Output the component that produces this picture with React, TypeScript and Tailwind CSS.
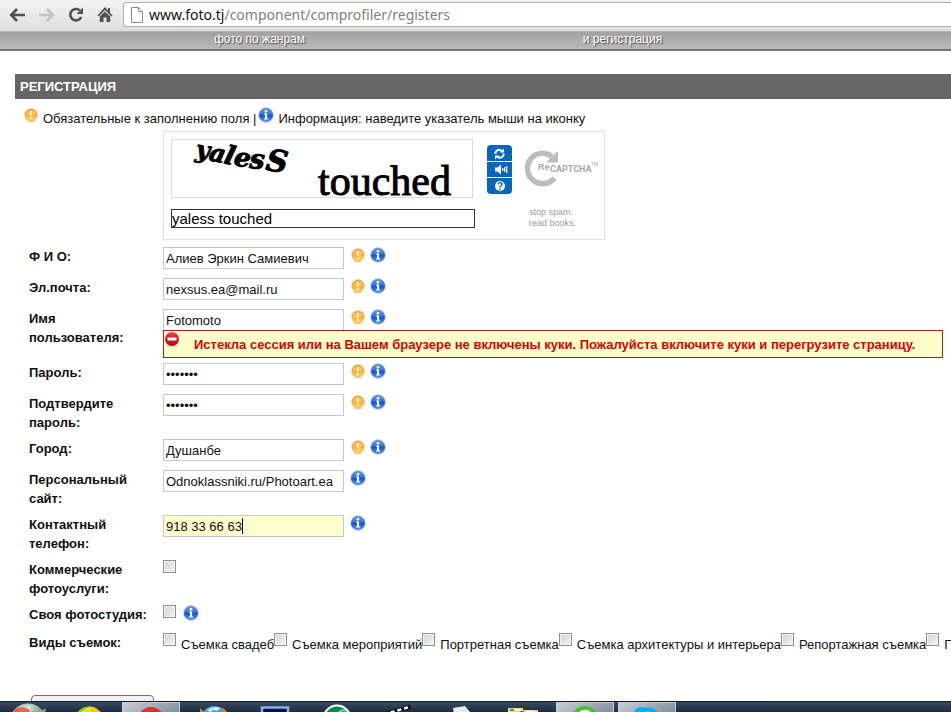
import React from 'react';

interface FieldRow {
  id: string;
  label: string;
  value: string;
  type?: string;
  required?: boolean;
  error?: string;
  focused?: boolean;
}

const fields: FieldRow[] = [
  { id: 'name', label: 'Ф И О:', value: 'Алиев Эркин Самиевич', required: true },
  { id: 'email', label: 'Эл.почта:', value: 'nexsus.ea@mail.ru', required: true },
  {
    id: 'username',
    label: 'Имя пользователя:',
    value: 'Fotomoto',
    required: true,
    error: 'Истекла сессия или на Вашем браузере не включены куки. Пожалуйста включите куки и перегрузите страницу.',
  },
  { id: 'password', label: 'Пароль:', value: 'fotomot', type: 'password', required: true },
  { id: 'password2', label: 'Подтвердите пароль:', value: 'fotomot', type: 'password', required: true },
  { id: 'city', label: 'Город:', value: 'Душанбе', required: true },
  { id: 'site', label: 'Персональный сайт:', value: 'Odnoklassniki.ru/Photoart.ea' },
  { id: 'phone', label: 'Контактный телефон:', value: '918 33 66 63', focused: true },
];

const shootings = [
  'Съемка свадеб',
  'Съемка мероприятий',
  'Портретная съемка',
  'Съемка архитектуры и интерьера',
  'Репортажная съемка',
  'Предметная съемка',
];

const RequiredIcon = () => (
  <svg className="w-4 h-4 shrink-0" viewBox="0 0 16 16" role="img" aria-label="Обязательное поле">
    <defs>
      <linearGradient id="orange" x1="0" y1="0" x2="0" y2="1">
        <stop offset="0" stopColor="#f0a63c" />
        <stop offset="0.5" stopColor="#fbb32c" />
        <stop offset="1" stopColor="#ffd765" />
      </linearGradient>
    </defs>
    <ellipse cx="8" cy="14.600" rx="5" ry="0.9" fill="#e6dccb" />
    <circle cx="8" cy="8" r="6.200" fill="url(#orange)" stroke="#eda943" strokeWidth="0.7" />
    <path d="M3 7a5.200 5.200 0 0 1 10 0q-5 2-10 0z" fill="#fff" opacity="0.22" />
    <path d="M7.100 4h1.800l-.3 5H7.400z" fill="#fff" />
    <circle cx="8" cy="11" r="1" fill="#fff" />
  </svg>
);

const InfoIcon = () => (
  <svg className="w-4 h-4 shrink-0" viewBox="0 0 16 16" role="img" aria-label="Информация">
    <defs>
      <linearGradient id="blue" x1="0" y1="0" x2="0" y2="1">
        <stop offset="0" stopColor="#6d9be2" />
        <stop offset="0.45" stopColor="#3a73d3" />
        <stop offset="0.5" stopColor="#0e50c8" />
        <stop offset="1" stopColor="#5c9df0" />
      </linearGradient>
    </defs>
    <circle cx="8" cy="8" r="7.200" fill="url(#blue)" stroke="#7d9fd6" strokeWidth="0.6" />
    <circle cx="8" cy="4.200" r="1.300" fill="#fff" />
    <path d="M6 6.500h3.100v5h1V12.600H6v-1.100h1V7.600H6z" fill="#fff" />
  </svg>
);

const ErrorIcon = () => (
  <svg className="w-4 h-4 shrink-0" viewBox="0 0 16 16" aria-hidden="true">
    <defs>
      <linearGradient id="red" x1="0" y1="0" x2="0" y2="1">
        <stop offset="0" stopColor="#e4505a" />
        <stop offset="0.5" stopColor="#cf1625" />
        <stop offset="1" stopColor="#b50f1c" />
      </linearGradient>
    </defs>
    <ellipse cx="8" cy="15" rx="5.500" ry="0.9" fill="#d9cfa8" />
    <circle cx="8" cy="8" r="7" fill="url(#red)" />
    <rect x="3.500" y="6.500" width="9" height="3" rx="0.5" fill="#fff" />
  </svg>
);

const Toolbar = () => (
  <div className="flex h-8 shrink-0 items-start border-b border-[#b5b5b5] bg-linear-to-b from-[#f4f4f4] to-[#dedede] pl-[9px]">
    <div className="flex shrink-0 items-center gap-[11px] pt-[5px]">
      <button type="button" aria-label="Назад">
        <svg className="w-[18px] h-5" viewBox="0 0 18 20" fill="none" stroke="#505050" strokeWidth="2.600">
          <path d="M2.500 10H16M8 4 2.200 10 8 16" />
        </svg>
      </button>
      <button type="button" aria-label="Вперед">
        <svg className="w-[18px] h-5" viewBox="0 0 18 20" fill="none" stroke="#c3c3c3" strokeWidth="2.600">
          <path d="M1 10h13.500M9 4 14.800 10 9 16" />
        </svg>
      </button>
      <button type="button" aria-label="Обновить">
        <svg className="w-[18px] h-5" viewBox="0 0 18 20" fill="none">
          <path d="M12.800 5.400A5.700 5.700 0 1 0 14.200 12" stroke="#505050" strokeWidth="2.600" />
          <path d="M16 2.500v6.500H9.500z" fill="#505050" />
        </svg>
      </button>
      <button type="button" aria-label="Домой">
        <svg className="w-[18px] h-5" viewBox="0 0 18 20" fill="#505050">
          <path d="M9 2 1.500 10.500l1.200 1L9 5l6.300 6.500 1.200-1-2.500-2.800V3h-2v2.500z" />
          <path d="M3.800 11.500 9 6.400l5.200 5.100V17h-3.700v-4.500h-3V17H3.800z" />
        </svg>
      </button>
    </div>
    <div className="ml-[9px] mt-0.5 flex h-[25px] flex-1 items-center rounded-l-sm border border-r-0 border-[#b0b0b0] bg-white pl-[7px]">
      <svg className="w-3 h-4 shrink-0" viewBox="0 0 12 16" fill="#fff" stroke="#8a8a8a">
        <path d="M.5.5h6.800l4.200 4.200v10.800H.5zM7.300.5v4.200h4.200" />
      </svg>
      <div role="textbox" aria-label="Адрес" className="ml-[6px] whitespace-nowrap font-['Noto_Sans',sans-serif] text-[14px] leading-5 text-[#111]">
        www.foto.tj<span className="text-[#808080]">/component/comprofiler/registers</span>
      </div>
    </div>
  </div>
);

const Captcha = () => (
  <div className="ml-[163px] flex h-[109px] w-[442px] border border-[#dfdfdf] pl-[7px] pt-[7px]">
    <div className="w-[304px] shrink-0">
      <div className="h-[59px] w-[302px] border border-[#dadada]">
        <svg className="block h-[57px] w-[300px] overflow-visible" viewBox="172 140 300 57" role="img" aria-label="yaless touched">
          <g fontFamily="DejaVu Serif, serif" fontWeight="bold" fontStyle="italic" fill="#000" stroke="#000" strokeWidth="0.9">
            <text x="195" y="157" fontSize="24" transform="rotate(8 195 157)">y</text>
            <text x="208" y="160" fontSize="25" transform="rotate(12 208 160)">a</text>
            <text x="223" y="163" fontSize="26" transform="rotate(14 223 163)">l</text>
            <text x="233" y="165" fontSize="26" transform="rotate(10 233 165)">e</text>
            <text x="249" y="168" fontSize="27" transform="rotate(4 249 168)">s</text>
            <text x="265" y="170" fontSize="30" transform="rotate(8 265 170)">S</text>
          </g>
          <text x="318" y="195" fontFamily="Liberation Serif, serif" fontSize="42" fill="#000" stroke="#000" strokeWidth="1">
            touched
          </text>
        </svg>
      </div>
      <input
        aria-label="Введите слова"
        defaultValue="yaless touched"
        className="mt-[11px] block h-[19px] w-full border border-[#333] text-[15px] leading-4 text-black outline-none"
      />
    </div>
    <div className="ml-3 mt-1.5 flex w-[25px] shrink-0 flex-col gap-px">
      <button type="button" aria-label="Другие слова" className="h-4 rounded-t-sm bg-[#0a66b8]">
        <svg className="mx-auto block h-4 w-[25px]" viewBox="0 0 25 16" fill="none" stroke="#fff" strokeWidth="2">
          <path d="M8.500 9V7.500a3.500 3.500 0 0 1 6-1.500M16.500 8.500V10a3.500 3.500 0 0 1-6 1.500" />
          <path d="M13 7.500h4V3.500zM12 10.500H8V14.500z" fill="#fff" stroke="none" />
        </svg>
      </button>
      <button type="button" aria-label="Прослушать" className="h-[15px] bg-[#0a66b8]">
        <svg className="block h-[15px] w-[25px]" viewBox="0 0 25 15" fill="none" stroke="#fff" strokeWidth="1.200">
          <path d="M8 5.500h2.500L14 2.500v10l-3.500-3H8z" fill="#fff" stroke="none" />
          <path d="M15.700 6v3M17.700 5v5M19.700 4v7" />
        </svg>
      </button>
      <button type="button" aria-label="Справка" className="h-4 rounded-b-sm bg-[#0a66b8]">
        <svg className="block h-4 w-[25px]" viewBox="0 0 25 16">
          <circle cx="13" cy="8" r="5" fill="#fff" />
          <text x="13" y="11.500" textAnchor="middle" fontFamily="Liberation Sans" fontSize="10" fontWeight="bold" fill="#0a66b8">?</text>
        </svg>
      </button>
    </div>
    <div className="ml-[13px] mt-[9px]">
      <svg className="block h-[42px] w-[74px]" viewBox="0 0 74 42">
        <path d="M27 8.500A15.200 15.200 0 1 0 29.500 30" fill="none" stroke="#bdbdbd" strokeWidth="5.500" />
        <path d="M33 3v11.500H21z" fill="#bdbdbd" />
        <text x="13" y="22" fontFamily="Liberation Sans, sans-serif" fontWeight="bold" fontSize="9" fill="#a8a8a8">Re</text>
        <text x="25" y="24" fontFamily="Roboto, sans-serif" fontWeight="bold" fontSize="9" fill="#a8a8a8">CAPTCHA</text>
        <text x="66" y="18" fontFamily="Roboto, sans-serif" fontSize="5" fill="#a8a8a8">TM</text>
      </svg>
      <p className="ml-1 mt-[17px] text-[9px] leading-[11px] text-[#999]">
        stop spam.
        <br />
        read books.
      </p>
    </div>
  </div>
);

const Checkbox = ({ id }: { id: string }) => (
  <input
    id={id}
    type="checkbox"
    className="h-[13px] w-[13px] shrink-0 appearance-none border border-[#8e8f8f] bg-linear-to-br from-[#cfd2d6] to-[#f6f6f6] outline-1 -outline-offset-2 outline-[#f4f4f4] checked:bg-[#3a73d3]"
  />
);

const labelClass = 'w-[134px] shrink-0 pr-3 font-bold leading-[19px]';

const Field = ({ field }: { field: FieldRow }) => (
  <div className={field.error ? 'flex pb-[5px]' : 'flex pb-[7px]'}>
    <label htmlFor={field.id} className={labelClass}>{field.label}</label>
    <div className="min-w-0 flex-1">
      <div className={field.error ? 'flex h-[21px] items-start' : 'flex h-6 items-start'}>
        <div className="relative mr-1.5">
          <input
            id={field.id}
            type={field.type || 'text'}
            defaultValue={field.value}
            className={`block h-[22px] w-[181px] border border-[#c8c8c8] px-0.5 outline-none ${field.focused ? 'bg-[#ffffcc]' : 'bg-white'}`}
          />
          {field.focused && <span className="absolute left-[79px] top-[3px] h-4 w-px bg-black" />}
        </div>
        <div className="flex gap-1">
          {field.required && <RequiredIcon />}
          <InfoIcon />
        </div>
      </div>
      {field.error && (
        <div role="alert" className="relative mr-2 flex h-7 border border-[#a02020] bg-[#ffffcc] font-bold leading-[28px] whitespace-nowrap text-[#dd0000]">
          <ErrorIcon />
          <span className="ml-3.5">{field.error}</span>
        </div>
      )}
    </div>
  </div>
);

const apps = [
  {
    name: 'Chrome',
    open: false,
    icon: (
      <>
        <circle cx="29" cy="19" r="14.500" fill="#8ecb25" />
        <path d="M29 4.500A14.500 14.500 0 0 1 43.500 19H29z" fill="#f5c518" />
        <path d="M20 11q5-5 9-5.500l3 2-6 4z" fill="#d9ea3c" />
      </>
    ),
  },
  {
    name: 'Opera',
    open: true,
    icon: <circle cx="29" cy="17" r="13.500" fill="#d8322f" />,
  },
  {
    name: 'Firefox',
    open: false,
    icon: (
      <>
        <circle cx="30" cy="17" r="13" fill="#3f9fdb" />
        <path d="M23 8q6-5 14-2l-4 3-4-1-3 3z" fill="#c5e9fa" />
        <path d="M16 12V6l4 4 5-1 3 3zM37 5q6 3 7 7h-5z" fill="#ee7a22" />
      </>
    ),
  },
  {
    name: 'Photoshop',
    open: false,
    icon: <rect x="16" y="5.500" width="26" height="24" fill="#0a0d58" stroke="#86aeee" strokeWidth="2.500" />,
  },
  {
    name: 'Utorrent',
    open: false,
    icon: (
      <>
        <circle cx="29" cy="17" r="13.500" fill="#0c8a4b" stroke="#fff" strokeWidth="2" />
        <path d="M30 11q4-4 8-2" fill="none" stroke="#7fd0a2" strokeWidth="2" />
      </>
    ),
  },
  {
    name: 'Movie Maker',
    open: false,
    icon: (
      <>
        <path d="M14 12.500 41 4.500" stroke="#111" strokeWidth="4" />
        <path d="M14 12.500 41 4.500" stroke="#fff" strokeWidth="2.500" strokeDasharray="4 3" />
      </>
    ),
  },
  {
    name: 'Документы',
    open: false,
    icon: <path d="M21 6l12-2 5 6v4H22z" fill="#e8e8e8" />,
  },
  {
    name: 'Проводник',
    open: false,
    icon: (
      <>
        <path d="M14 14V6h15v2h15v6z" fill="#f1d588" />
        <path d="M16 7h4v2h-4z" fill="#2cae4a" />
        <path d="M26 9h4v2h-4z" fill="#d44a2c" />
        <path d="M21 7h6v1.500h-6zM31 9h9v1.500h-9z" fill="#fff" />
      </>
    ),
  },
  {
    name: 'Агент',
    open: true,
    icon: (
      <>
        <circle cx="29" cy="17" r="14.500" fill="#43c52c" />
        <circle cx="29" cy="15" r="7.500" fill="none" stroke="#fff" strokeWidth="2.500" />
      </>
    ),
  },
  {
    name: 'Skype',
    open: true,
    icon: (
      <>
        <circle cx="23" cy="11" r="7.500" fill="#09aef0" />
        <circle cx="30" cy="17" r="13" fill="#09aef0" />
        <path d="M25 11q5-3 9 0" fill="none" stroke="#fff" strokeWidth="2.500" />
      </>
    ),
  },
];

const Taskbar = () => (
  <div className="flex h-[11px] shrink-0 gap-1 overflow-hidden border-t border-[#101820] bg-linear-to-b from-[#3a4b60] to-[#1b2c42]">
    <button type="button" aria-label="Пуск" className="-mr-0.5 h-10 w-[58px] shrink-0">
      <svg className="block h-10 w-[58px]" viewBox="0 0 58 40">
        <defs>
          <radialGradient id="orb" cx="0.5" cy="0.1" r="0.5">
            <stop offset="0" stopColor="#dfe6dc" />
            <stop offset="1" stopColor="#5c7c84" />
          </radialGradient>
        </defs>
        <circle cx="28" cy="20" r="18" fill="url(#orb)" stroke="#b7c8c5" />
        <ellipse cx="22" cy="10" rx="8" ry="4.500" fill="#f0562e" opacity="0.85" />
        <path d="M32 9q6 2 14-3l-1 7H31z" fill="#5fc83c" opacity="0.9" />
      </svg>
    </button>
    {apps.map(app => (
      <button
        key={app.name}
        type="button"
        aria-label={app.name}
        className={`h-10 w-[58px] shrink-0 ${app.open ? 'border-x border-t border-[#c5ccd4] bg-linear-to-br from-[#c9ced4] to-[#59697c]' : ''}`}
      >
        <svg className="block h-10 w-full" viewBox="0 0 58 40">{app.icon}</svg>
      </button>
    ))}
  </div>
);

const App: React.FC = () => {
  return (
    <div className="flex h-screen flex-col overflow-hidden bg-white font-['Liberation_Sans',Arial,sans-serif] text-[13px] text-[#111]">
      <Toolbar />
      <nav className="grid h-[19px] shrink-0 grid-cols-[363px_363px] border-b-2 border-[#757575] bg-linear-to-b from-[#a2a2a2] to-[#b9b9b9] pl-[78px] text-center text-[12px] leading-[15px] text-white [text-shadow:1px_1px_1px_#444]">
        <a href="#genres">фото по жанрам</a>
        <a href="#register">и регистрация</a>
      </nav>
      <main className="min-h-0 flex-1 overflow-hidden pt-[23px]">
        <h1 className="ml-[15px] bg-[#666] pl-[5px] text-[13px] font-bold leading-[25px] text-white">РЕГИСТРАЦИЯ</h1>
        <form>
          <div className="flex h-8 items-start whitespace-nowrap pl-[23px] pt-2 leading-6">
            <RequiredIcon />
            <span className="ml-1 mr-0.5">Обязательные к заполнению поля |</span>
            <InfoIcon />
            <span className="ml-1">Информация: наведите указатель мыши на иконку</span>
          </div>
          <Captcha />
          <div className="pl-[29px] pt-[7px]">
            {fields.map(field => (
              <Field key={field.id} field={field} />
            ))}
            <div className="flex pb-[7px]">
              <label htmlFor="commercial" className={labelClass}>Коммерческие фотоуслуги:</label>
              <Checkbox id="commercial" />
            </div>
            <div className="flex pb-[9px]">
              <label htmlFor="studio" className="w-[134px] shrink-0 font-bold leading-[19px]">Своя фотостудия:</label>
              <div className="flex gap-[7px]">
                <Checkbox id="studio" />
                <InfoIcon />
              </div>
            </div>
            <fieldset className="flex">
              <legend className="float-left w-[134px] shrink-0 font-bold leading-[19px]">Виды съемок:</legend>
              <div className="flex whitespace-nowrap">
                {shootings.map((name, i) => (
                  <span key={name} className="flex">
                    <Checkbox id={`shooting-${i}`} />
                    <label htmlFor={`shooting-${i}`} className="ml-[5px] leading-[23px]">{name}</label>
                  </span>
                ))}
              </div>
            </fieldset>
          </div>
          <button type="submit" aria-label="Регистрация" className="ml-[31px] mt-[39px] h-[26px] w-[123px] rounded-sm border border-[#707070] bg-[#f2f2f2]" />
        </form>
      </main>
      <Taskbar />
    </div>
  );
};

export default App;
